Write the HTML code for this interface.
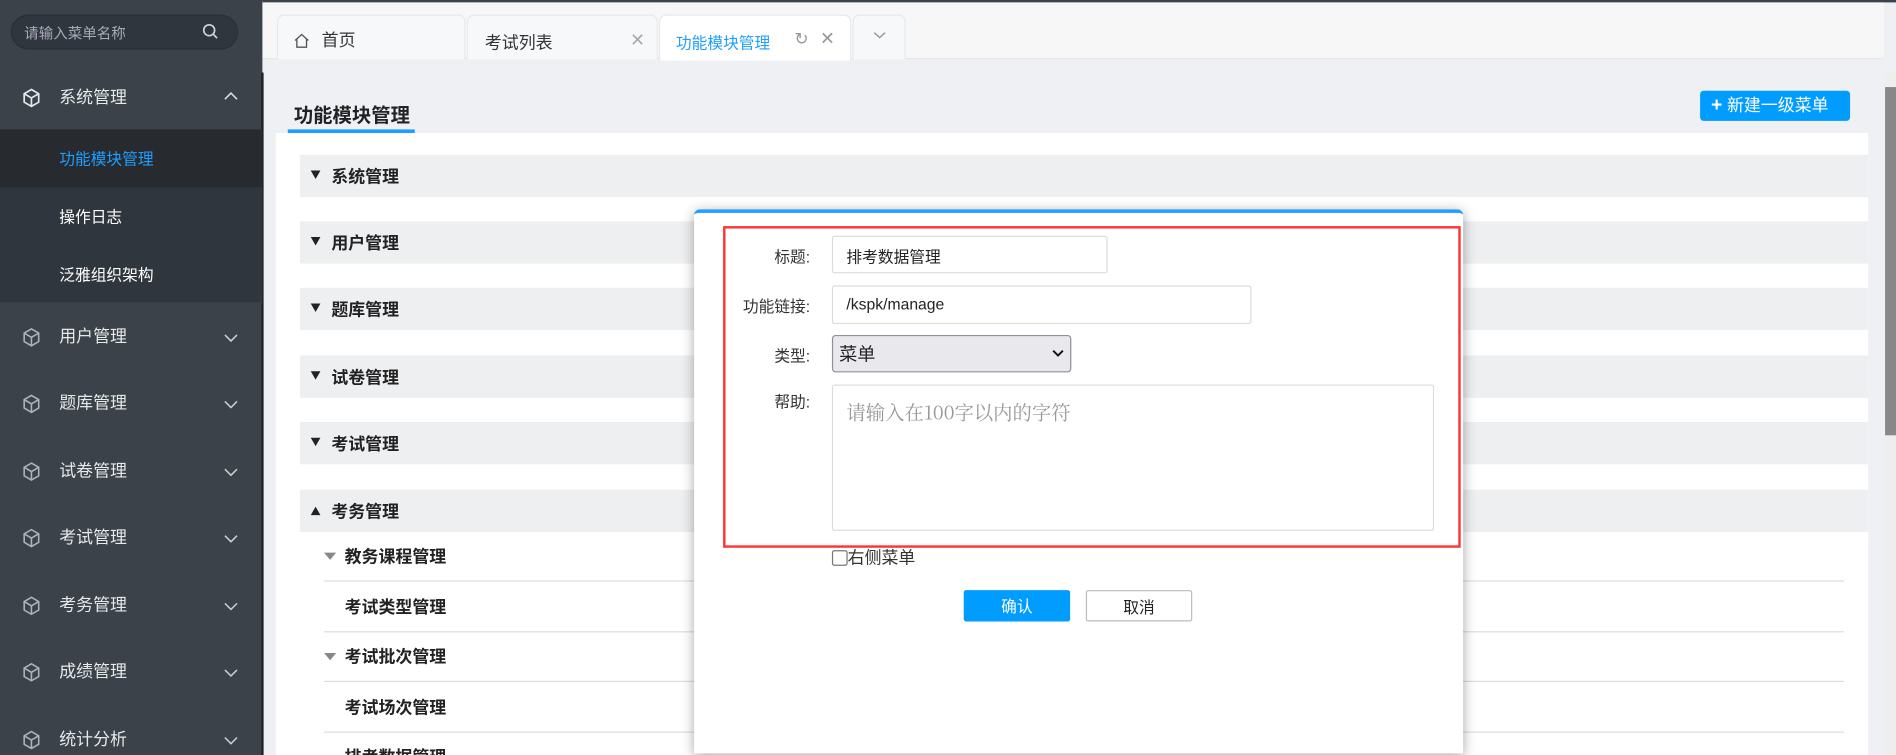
<!DOCTYPE html>
<html><head><meta charset="utf-8"><style>
*{box-sizing:border-box;margin:0;padding:0}
html,body{width:1896px;height:755px;overflow:hidden;background:#eef0f3}
#w{width:1568px;height:625px;transform:scale(1.20918);transform-origin:0 0;position:relative;font-family:"Liberation Sans","Noto Sans CJK SC",sans-serif;font-size:14px;color:#333}
.a{position:absolute}
#sb{left:0;top:0;width:217px;height:625px;background:#3b424a}
#sb .srch{left:9px;top:12px;width:188px;height:29px;border-radius:15px;background:#30363d;border:1px solid #2a2f35;color:#aab;font-size:12px;padding:6px 0 0 10px}
.mi{left:0;width:217px;height:55px;color:#e6e8ea;font-size:14px}
.mi span{position:absolute;left:49px;top:16px}
.mi svg.c{position:absolute;left:19px;top:19px}
.sub{left:0;width:217px;height:48px;background:#30363d;color:#fff;font-size:13px}
.sub span{position:absolute;left:49px;top:14px}
.tab{top:12px;height:37px;background:#f7f8f9;border:1px solid #e6e8ec;border-bottom:none;border-radius:6px 6px 0 0;font-size:14px}
.row{left:248px;width:1297px;height:35px;background:#eeeff1;font-weight:bold;font-size:14px;color:#222}
.row span{position:absolute;left:26px;top:8px}
.row i{position:absolute;left:9px;top:13px;width:0;height:0;border-left:4.5px solid transparent;border-right:4.5px solid transparent;border-top:7px solid #222}
.sr{left:268px;width:1257px;height:41px;border-bottom:1px solid #ddd;font-weight:bold;font-size:14px;color:#222}
.sr span{position:absolute;left:17px;top:10px}
.sr i{position:absolute;left:0;top:17px;border-left:5px solid transparent;border-right:5px solid transparent;border-top:6px solid #888}
.lb{width:100px;text-align:right;left:570px;font-size:13px;color:#333}
.in{left:688px;background:#fff;border:1px solid #ddd;border-radius:2px;font-size:13px;padding:6px 0 0 11px;color:#222}
</style></head><body><div id="w">
<div class="a" style="left:217px;top:0;width:1351px;height:2px;background:#3b424a"></div>
<div class="a" style="left:217px;top:2px;width:1341px;height:47px;background:#f7f7f7;border-bottom:1px solid #e4e6ea"></div>
<div id="sb" class="a">
<div class="a srch">请输入菜单名称<svg class="a" style="left:157px;top:6px" width="14" height="14" viewBox="0 0 14 14"><circle cx="6" cy="6" r="4.5" fill="none" stroke="#cfd3d8" stroke-width="1.4"/><path d="M9.5 9.5L12.5 12.5" stroke="#cfd3d8" stroke-width="1.4"/></svg></div>
</div>
<div class="a" style="left:216px;top:60px;width:2px;height:565px;background:#1e2226"></div>
<div class="a mi" style="top:54px"><svg class="c" width="14" height="16" viewBox="0 0 14 16"><path d="M7 1L13 4.5V11.5L7 15L1 11.5V4.5Z M1 4.5L7 8L13 4.5 M7 8V15" fill="none" stroke="#e6e8ea" stroke-width="1.4"/></svg><span>系统管理</span><svg width="12" height="12" viewBox="0 0 12 12" style="position:absolute;left:185px;top:20px"><path d="M1 8L6 3L11 8" fill="none" stroke="#ddd" stroke-width="1.3"/></svg></div>
<div class="a sub" style="top:107px;background:#272b30;color:#1e9fff"><span>功能模块管理</span></div>
<div class="a sub" style="top:155px"><span>操作日志</span></div>
<div class="a sub" style="top:203px"><span>泛雅组织架构</span></div>
<div class="a" style="left:0;top:250px;width:216px;height:375px;background:#3b424a"></div>
<div class="a mi" style="top:252px"><svg class="c" width="14" height="16" viewBox="0 0 14 16"><path d="M7 1L13 4.5V11.5L7 15L1 11.5V4.5Z M1 4.5L7 8L13 4.5 M7 8V15" fill="none" stroke="#aeb3b8" stroke-width="1.3"/></svg><span>用户管理</span><svg width="12" height="12" viewBox="0 0 12 12" style="position:absolute;left:185px;top:21px"><path d="M1 4L6 9L11 4" fill="none" stroke="#ccc" stroke-width="1.3"/></svg></div>
<div class="a mi" style="top:307px"><svg class="c" width="14" height="16" viewBox="0 0 14 16"><path d="M7 1L13 4.5V11.5L7 15L1 11.5V4.5Z M1 4.5L7 8L13 4.5 M7 8V15" fill="none" stroke="#aeb3b8" stroke-width="1.3"/></svg><span>题库管理</span><svg width="12" height="12" viewBox="0 0 12 12" style="position:absolute;left:185px;top:21px"><path d="M1 4L6 9L11 4" fill="none" stroke="#ccc" stroke-width="1.3"/></svg></div>
<div class="a mi" style="top:363px"><svg class="c" width="14" height="16" viewBox="0 0 14 16"><path d="M7 1L13 4.5V11.5L7 15L1 11.5V4.5Z M1 4.5L7 8L13 4.5 M7 8V15" fill="none" stroke="#aeb3b8" stroke-width="1.3"/></svg><span>试卷管理</span><svg width="12" height="12" viewBox="0 0 12 12" style="position:absolute;left:185px;top:21px"><path d="M1 4L6 9L11 4" fill="none" stroke="#ccc" stroke-width="1.3"/></svg></div>
<div class="a mi" style="top:418px"><svg class="c" width="14" height="16" viewBox="0 0 14 16"><path d="M7 1L13 4.5V11.5L7 15L1 11.5V4.5Z M1 4.5L7 8L13 4.5 M7 8V15" fill="none" stroke="#aeb3b8" stroke-width="1.3"/></svg><span>考试管理</span><svg width="12" height="12" viewBox="0 0 12 12" style="position:absolute;left:185px;top:21px"><path d="M1 4L6 9L11 4" fill="none" stroke="#ccc" stroke-width="1.3"/></svg></div>
<div class="a mi" style="top:474px"><svg class="c" width="14" height="16" viewBox="0 0 14 16"><path d="M7 1L13 4.5V11.5L7 15L1 11.5V4.5Z M1 4.5L7 8L13 4.5 M7 8V15" fill="none" stroke="#aeb3b8" stroke-width="1.3"/></svg><span>考务管理</span><svg width="12" height="12" viewBox="0 0 12 12" style="position:absolute;left:185px;top:21px"><path d="M1 4L6 9L11 4" fill="none" stroke="#ccc" stroke-width="1.3"/></svg></div>
<div class="a mi" style="top:529px"><svg class="c" width="14" height="16" viewBox="0 0 14 16"><path d="M7 1L13 4.5V11.5L7 15L1 11.5V4.5Z M1 4.5L7 8L13 4.5 M7 8V15" fill="none" stroke="#aeb3b8" stroke-width="1.3"/></svg><span>成绩管理</span><svg width="12" height="12" viewBox="0 0 12 12" style="position:absolute;left:185px;top:21px"><path d="M1 4L6 9L11 4" fill="none" stroke="#ccc" stroke-width="1.3"/></svg></div>
<div class="a mi" style="top:585px"><svg class="c" width="14" height="16" viewBox="0 0 14 16"><path d="M7 1L13 4.5V11.5L7 15L1 11.5V4.5Z M1 4.5L7 8L13 4.5 M7 8V15" fill="none" stroke="#aeb3b8" stroke-width="1.3"/></svg><span>统计分析</span><svg width="12" height="12" viewBox="0 0 12 12" style="position:absolute;left:185px;top:21px"><path d="M1 4L6 9L11 4" fill="none" stroke="#ccc" stroke-width="1.3"/></svg></div>

<div class="a tab" style="left:229px;width:156px"><svg class="a" style="left:13px;top:14px" width="13" height="13" viewBox="0 0 13 13"><path d="M1 6.5L6.5 1.5L12 6.5 M2.5 5.5V12H10.5V5.5" fill="none" stroke="#555" stroke-width="1.1"/></svg><span class="a" style="left:36px;top:10px">首页</span></div>
<div class="a tab" style="left:386px;width:158px"><span class="a" style="left:14px;top:12px">考试列表</span><span class="a" style="left:134px;top:11px;color:#aaa;font-size:15px">✕</span></div>
<div class="a tab" style="left:545px;width:159px;background:#fff;height:38px"><span class="a" style="left:13px;top:12px;color:#1e9fff;font-size:13px">功能模块管理</span><span class="a" style="left:111px;top:11px;color:#999;font-size:14px">↻</span><span class="a" style="left:132px;top:10px;color:#999;font-size:15px">✕</span></div>
<div class="a tab" style="left:705px;width:44px"><svg class="a" style="left:16px;top:12px" width="11" height="8" viewBox="0 0 11 8"><path d="M1 2L5.5 6L10 2" fill="none" stroke="#999" stroke-width="1.2"/></svg></div>

<div class="a" style="left:228px;top:110px;width:1317px;height:515px;background:#fff"></div>
<div class="a" style="left:243px;top:82px;font-size:16px;font-weight:bold;color:#222">功能模块管理</div>
<div class="a" style="left:238px;top:107px;width:105px;height:3px;background:#1e9fff"></div>
<div class="a" style="left:1406px;top:75px;width:124px;height:25px;background:#009cff;border-radius:3px;color:#fff;font-size:14px;padding:2px 0 0 9px"><b style="font-size:16px">+</b> 新建一级菜单</div>
<div class="a" style="left:1558px;top:60px;width:10px;height:565px;background:#eee"></div>
<div class="a" style="left:1559px;top:72px;width:9px;height:288px;background:#888"></div>

<div class="a row" style="top:128px"><i></i><span>系统管理</span></div>
<div class="a row" style="top:183px"><i></i><span>用户管理</span></div>
<div class="a row" style="top:238px"><i></i><span>题库管理</span></div>
<div class="a row" style="top:294px"><i></i><span>试卷管理</span></div>
<div class="a row" style="top:349px"><i></i><span>考试管理</span></div>
<div class="a row" style="top:405px"><i style="border-top:none;border-bottom:7px solid #222;top:14px"></i><span>考务管理</span></div>
<div class="a sr" style="top:440px"><i></i><span>教务课程管理</span></div>
<div class="a sr" style="top:482px"><span>考试类型管理</span></div>
<div class="a sr" style="top:523px"><i></i><span>考试批次管理</span></div>
<div class="a sr" style="top:565px"><span>考试场次管理</span></div>
<div class="a sr" style="top:606px;border:none"><span>排考数据管理</span></div>

<div class="a" style="left:574px;top:173px;width:636px;height:450px;background:#fff;border-top:3px solid #1e9fff;border-radius:5px 5px 0 0;box-shadow:0 2px 10px rgba(0,0,0,.35)"></div>
<div class="a" style="left:598px;top:187px;width:610px;height:266px;border:2px solid #f33"></div>
<div class="a lb" style="top:202px">标题:</div>
<div class="a lb" style="top:243px">功能链接:</div>
<div class="a lb" style="top:284px">类型:</div>
<div class="a lb" style="top:322px">帮助:</div>
<div class="a in" style="top:195px;width:228px;height:31px">排考数据管理</div>
<div class="a in" style="top:236px;width:347px;height:32px;padding-top:7px">/kspk/manage</div>
<div class="a in" style="top:277px;width:198px;height:31px;background:#e9e9ed;border-color:#8f8f9d;border-radius:3px;padding:4px 0 0 5px;font-size:15px">菜单<svg class="a" style="left:181px;top:11px" width="10" height="7" viewBox="0 0 10 7"><path d="M1 1L5 5L9 1" fill="none" stroke="#111" stroke-width="1.6"/></svg></div>
<div class="a in" style="top:318px;width:498px;height:121px;color:#999;font-size:16px;padding:10px 0 0 11px;font-family:'Noto Serif CJK SC','Liberation Serif',serif">请输入在100字以内的字符</div>
<div class="a" style="left:688px;top:455px;width:13px;height:13px;border:1.5px solid #777;border-radius:2px"></div>
<div class="a" style="left:701px;top:451px;font-size:14px">右侧菜单</div>
<div class="a" style="left:797px;top:488px;width:88px;height:26px;background:#009cff;border-radius:2px;color:#fff;text-align:center;font-size:13px;padding-top:3px">确认</div>
<div class="a" style="left:898px;top:488px;width:88px;height:26px;background:#fff;border:1px solid #bbb;border-radius:2px;color:#222;text-align:center;font-size:13px;padding-top:3px">取消</div>
</div></body></html>
